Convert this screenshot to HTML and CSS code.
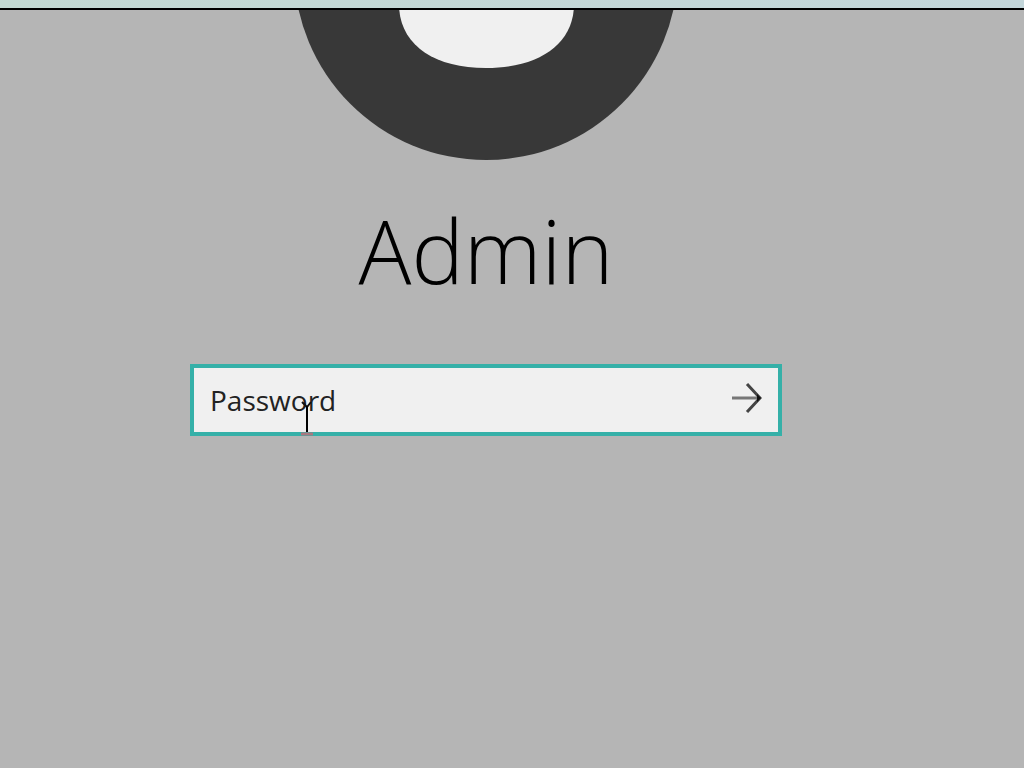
FILE: index.html
```html
<!DOCTYPE html>
<html lang="en">
<head>
  <meta charset="utf-8">
  <title>Sign in</title>
  <meta name="viewport" content="width=device-width, initial-scale=1.0">
  <link rel="stylesheet" href="styles.css">
</head>

<body>

<header class="top-bar"></header>

<main class="login">

  <!-- user picture, cut off by the top bar -->
  <svg class="avatar" viewBox="0 0 384 150" aria-hidden="true">
    <circle cx="192" cy="-42" r="192" fill="#383838"/>
    <path d="M105 -6 C105 34 139 58 192 58 C245 58 280 34 280 -6 Z" fill="#f0f0f0"/>
  </svg>

  <h1 class="user-name">Admin</h1>

  <form class="password-form">
    <input class="password-input" type="password" placeholder="Password" aria-label="Password">
    <button class="submit-button" type="button" aria-label="Submit">
      <svg width="32" height="32" viewBox="0 0 32 32" fill="none" aria-hidden="true">
        <path d="M2 16H30" stroke="#777" stroke-width="3"/>
        <path d="M17 2L30 16L17 30" stroke="#444" stroke-width="3"/>
        <path d="M27 12L31 16L27 20Z" fill="#111"/>
      </svg>
    </button>
    <!-- text cursor -->
    <svg class="cursor" width="16" height="36" viewBox="0 0 16 36" fill="none" aria-hidden="true">
      <path d="M3 2L8 7L12 2" stroke="#111" stroke-width="2"/>
      <path d="M8 6V32" stroke="#000" stroke-width="2"/>
      <path d="M2 34H14" stroke="#a87880" stroke-width="3"/>
    </svg>
  </form>

</main>

</body>
</html>
```

FILE: styles.css
```css
* {
  box-sizing: border-box;
}

body {
  margin: 0;
  min-height: 100vh;
  font-family: "Open Sans", "Noto Sans", sans-serif;
  background-color: #b5b5b5;
  color: #000;
}

.top-bar {
  height: 10px;
  background: linear-gradient(to right, #c3d9d3, #c3d6da);
  border-bottom: 2px solid #000;
}

/* the column sits a little left of the middle */
.login {
  display: flex;
  flex-direction: column;
  align-items: center;
  padding: 0 52px 0 0;
}

.avatar {
  display: block;
  width: 384px;
  max-width: 100%;
}

.user-name {
  margin: 30px 0 54px;
  font-size: 88px;
  font-weight: 300;
  line-height: 120px;
}

.password-form {
  position: relative;
  display: flex;
  width: 100%;
  max-width: 592px;
  height: 72px;
  border: 4px solid #35b0a8;
  background-color: #f0f0f0;
}

.password-input {
  flex: 1;
  min-width: 0;
  padding: 0 16px;
  border: 0;
  outline: 0;
  background: transparent;
  font-family: inherit;
  font-size: 28px;
  color: #222;
}

.password-input::placeholder {
  color: #222;
  opacity: 1;
}

.submit-button {
  display: flex;
  align-items: center;
  justify-content: center;
  width: 64px;
  padding: 0 0 4px;
  border: 0;
  background: transparent;
}

.cursor {
  position: absolute;
  left: 105px;
  top: 32px;
}
```
